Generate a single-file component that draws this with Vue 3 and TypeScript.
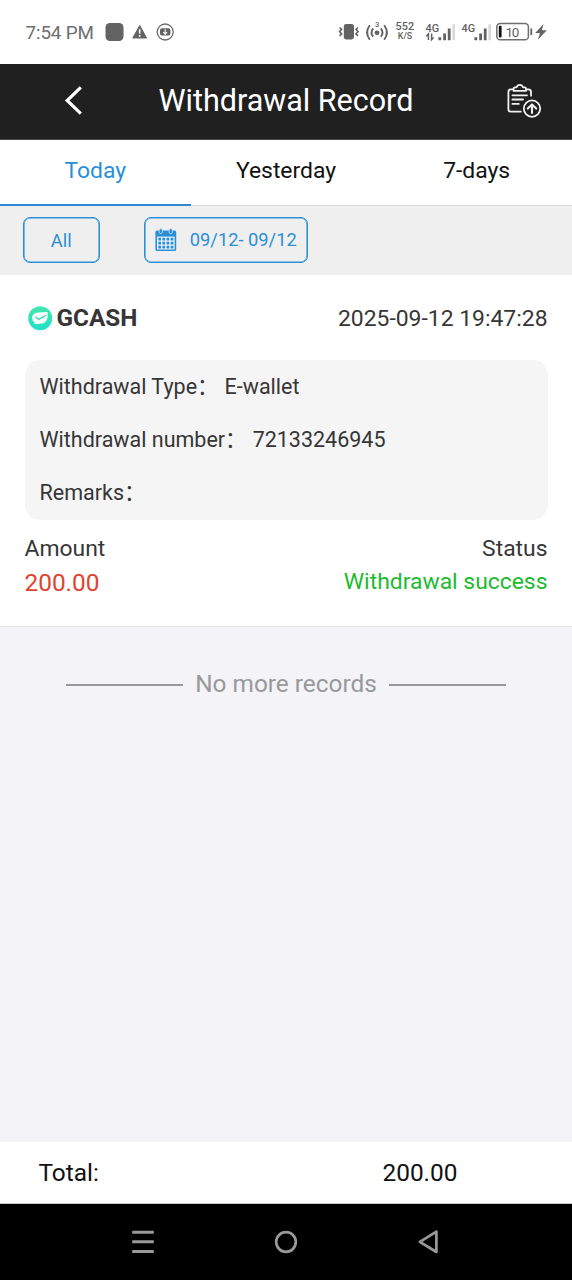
<script setup lang="ts">
import { ref } from 'vue'

interface Detail {
  label: string
  value: string
}

const tabs: string[] = ['Today', 'Yesterday', '7-days']
const active = ref(0)

const details: Detail[] = [
  { label: 'Withdrawal Type', value: 'E-wallet' },
  { label: 'Withdrawal number', value: '72133246945' },
  { label: 'Remarks', value: '' },
]

const gridRows = [0, 1, 2]
const gridCols = [0, 1, 2, 3]
</script>

<template>
  <div class="screen">
    <div class="status">
      <span class="clock">7:54 PM</span>
      <svg class="notices" width="72" height="24" viewBox="104 20 72 24">
        <rect x="105.5" y="23" width="18" height="18" rx="4.5" fill="#636363" />
        <path d="M139.7 25.5 L146.6 38 H132.8 Z" fill="#636363" stroke="#636363" stroke-linejoin="round" />
        <path d="M139.7 29.3 V33.8 M139.7 35 V36.8" stroke="#fff" stroke-width="1.6" />
        <circle cx="165.2" cy="32" r="8" fill="none" stroke="#6b6b6b" stroke-width="1.3" />
        <rect x="160" y="28.2" width="10.4" height="7.4" rx="2" fill="#636363" />
        <path d="M165.2 29.3 V33.8 M163.3 32.2 L165.2 34.2 L167.1 32.2" fill="none" stroke="#fff" stroke-width="1.1" />
      </svg>
      <svg class="signals" width="216" height="32" viewBox="336 16 216 32">
        <g fill="none" stroke="#636363" stroke-width="1.6">
          <rect x="344.6" y="24.8" width="8.6" height="13.8" rx="1.6" fill="#636363" />
          <path d="M339.6 27.5 l2 1.8 l-2 2.3 l2 2.3 l-2 2" />
          <path d="M358 27.5 l-2 1.8 l2 2.3 l-2 2.3 l2 2" />
          <g stroke-width="1.9">
            <path d="M369.8 25.3 Q364.4 32.5 369.8 39.7 M373.2 28.3 Q369.8 32.5 373.2 36.7" />
            <path d="M384.2 25.3 Q389.6 32.5 384.2 39.7 M380.8 28.3 Q384.2 32.5 380.8 36.7" />
          </g>
        </g>
        <circle cx="377" cy="32.8" r="2.4" fill="#636363" />
        <g class="tiny" fill="#5f5f5f">
          <text x="374.9" y="27" font-size="7.6">3</text>
          <text x="395.6" y="29.8" font-size="11.2" textLength="18.6" lengthAdjust="spacingAndGlyphs">552</text>
          <text x="397.8" y="38.9" font-size="9" textLength="14.4" lengthAdjust="spacingAndGlyphs">K/S</text>
          <text x="425.6" y="31.6" font-size="11.2" textLength="13.6" lengthAdjust="spacingAndGlyphs">4G</text>
          <text x="461.6" y="31.6" font-size="11.2" textLength="13.6" lengthAdjust="spacingAndGlyphs">4G</text>
          <text x="505.4" y="36.5" font-size="13.4" textLength="13.8" class="level">10</text>
        </g>
        <path d="M428.4 40 V34 l-2 2.2 M431.6 33.5 V39.6 l2 -2.2" fill="none" stroke="#636363" stroke-width="1.5" />
        <g fill="#636363">
          <path d="M438.4 37.2h2.8v3h-2.8z M443.2 33.4h2.8v6.8h-2.8z M447.8 28.4h2.8v11.8h-2.8z" />
          <path d="M474.4 37.2h2.8v3h-2.8z M479.2 33.4h2.8v6.8h-2.8z M483.8 28.4h2.8v11.8h-2.8z" />
          <path d="M452.4 24.2h2.6v16h-2.6z M488.4 24.2h2.6v16h-2.6z" fill="#d9d9d9" />
          <rect x="530.4" y="28.5" width="1.8" height="6.6" />
          <path d="M543.6 24 L535.2 33 H540 L537.8 39.8 L546.8 30.2 H541.8 Z" />
        </g>
        <rect x="496.8" y="23.6" width="31.6" height="16.2" rx="3.4" fill="none" stroke="#6f6f6f" stroke-width="1.5" />
        <rect x="498.8" y="25.8" width="2.8" height="11.8" rx="1" fill="#111" />
      </svg>
    </div>

    <header class="header">
      <svg class="back" width="24" height="34" viewBox="62 84 24 34">
        <path d="M80.8 87.4 L67.2 100.5 L80.8 113.6" fill="none" stroke="#fff" stroke-width="3.2" />
      </svg>
      <h1>Withdrawal Record</h1>
      <svg class="report" width="40" height="40" viewBox="504 82 40 40">
        <g fill="none" stroke="#f0f0f0" stroke-width="1.8" stroke-linecap="round" stroke-linejoin="round">
          <path d="M513 90.3 H511 Q508.4 90.3 508.4 93 V109.9 Q508.4 112.7 511 112.7 H520.8 M526.6 90.3 H528.4 Q531 90.3 531 93 V96.7" />
          <path d="M513.6 91.9 V89.5 Q513.6 88.3 515 88.3 H516.6 Q517.4 85.9 519.8 85.9 Q522.2 85.9 523 88.3 H524.6 Q526 88.3 526 89.5 V91.9 Z" />
          <path d="M512.4 96.3 H527 M512.4 100.5 H523 M512.4 104.9 H518.8" />
          <circle cx="532" cy="109.6" r="8.2" />
          <path d="M532 114 V106 M527.8 109.6 L532 105.4 L536.2 109.6" stroke-width="2.1" />
        </g>
      </svg>
    </header>

    <nav class="tabs">
      <button
        v-for="(tab, i) in tabs"
        :key="tab"
        type="button"
        :class="{ active: i === active }"
        @click="active = i"
      >
        {{ tab }}
      </button>
    </nav>

    <div class="filters">
      <button type="button" class="chip all">All</button>
      <button type="button" class="chip range">
        <svg width="22" height="24" viewBox="0 0 22 24">
          <path d="M.4 4.2 Q.4 2.6 2 2.6 H19.6 Q21.2 2.6 21.2 4.2 V21.4 Q21.2 23 19.6 23 H2 Q.4 23 .4 21.4 Z" fill="#2a8fd8" />
          <rect x="2" y="8.6" width="17.6" height="12.9" fill="#f4f7fa" />
          <g fill="#2a8fd8" stroke="#efefef" stroke-width=".7">
            <rect x="4.2" y=".6" width="3.2" height="5" rx="1.5" />
            <rect x="14.2" y=".6" width="3.2" height="5" rx="1.5" />
          </g>
          <g v-for="r in gridRows" :key="r" fill="#2a8fd8">
            <rect v-for="c in gridCols" :key="c" :x="3.3 + c * 4.1" :y="9.7 + r * 4" width="2.8" height="2.8" />
          </g>
        </svg>
        <span>09/12- 09/12</span>
      </button>
    </div>

    <section class="card">
      <div class="card-head">
        <svg width="26" height="26" viewBox="0 0 26 26">
          <defs>
            <linearGradient id="mint" x1="0" y1="0" x2="0" y2="1">
              <stop offset="0" stop-color="#43e8ad" />
              <stop offset="1" stop-color="#20dfc8" />
            </linearGradient>
          </defs>
          <circle cx="13.2" cy="13.2" r="12" fill="url(#mint)" />
          <path d="M5 13.2 Q5 7.6 11.5 7.4 Q17 6.8 20.7 7.2 Q21.6 18 14.5 18.5 Q10 19 7 19 L7.8 17.4 Q5 16 5 13.2 Z" fill="#f5fffc" />
          <path d="M8.6 11.8 L11.6 14.4 L19 10.2" fill="none" stroke="#35d9b2" stroke-width="1.3" />
        </svg>
        <strong>GCASH</strong>
        <time>2025-09-12 19:47:28</time>
      </div>

      <dl class="details">
        <div v-for="row in details" :key="row.label">
          <dt>{{ row.label }}：</dt>
          <dd>{{ row.value }}</dd>
        </div>
      </dl>

      <div class="summary labels">
        <span class="amount-label">Amount</span>
        <span class="status-label">Status</span>
      </div>
      <div class="summary values">
        <span class="amount">200.00</span>
        <span class="success">Withdrawal success</span>
      </div>
    </section>

    <main class="rest">
      <div class="end">
        <i></i>
        <span>No more records</span>
        <i></i>
      </div>
    </main>

    <footer class="total">
      <span>Total:</span>
      <span class="sum">200.00</span>
    </footer>

    <div class="navbar">
      <svg width="24" height="26" viewBox="0 0 24 26">
        <path d="M1.2 3.3 H22.8 M1.2 12.8 H22.8 M1.2 22.4 H22.8" stroke="#999" stroke-width="3" />
      </svg>
      <svg width="24" height="26" viewBox="0 0 24 26">
        <circle cx="12" cy="13" r="9.8" fill="none" stroke="#999" stroke-width="2.7" />
      </svg>
      <svg width="24" height="26" viewBox="0 0 24 26">
        <path d="M19.4 2.6 V23 L2.9 12.8 Z" fill="none" stroke="#999" stroke-width="2.7" stroke-linejoin="round" />
      </svg>
    </div>
  </div>
</template>

<style>
body {
  margin: 0;
}
</style>

<style scoped>
.screen {
  display: flex;
  flex-direction: column;
  width: 572px;
  height: 1280px;
  overflow: hidden;
  background: #f3f3f8;
  font-family: Roboto, "Noto Sans CJK SC", sans-serif;
  color: #363636;
  white-space: nowrap;
}
svg {
  display: block;
  flex: none;
}
button {
  margin: 0;
  padding: 0;
  border: 0;
  background: none;
  font-family: inherit;
}
.status {
  display: flex;
  align-items: center;
  height: 64px;
  flex: none;
  background: #fff;
}
.clock {
  width: 78.5px;
  padding: 2px 0 0 25.5px;
  font-size: 18.8px;
  letter-spacing: -0.1px;
  color: #6e6e6e;
}
.signals {
  margin-left: 160px;
}
.tiny {
  font-family: Roboto, sans-serif;
  font-weight: 500;
}
.level {
  font-weight: 400;
}
.header {
  display: flex;
  align-items: center;
  box-sizing: border-box;
  height: 76px;
  flex: none;
  padding: 0 28px 2px 62px;
  border-bottom: 1px solid #4a4748;
  background: #202020;
}
h1 {
  flex: 1;
  margin: 0 0 0 72.5px;
  font-size: 30.5px;
  line-height: 40px;
  font-weight: 400;
  color: #fff;
}
.tabs {
  display: grid;
  grid-template-columns: repeat(3, 1fr);
  height: 66px;
  flex: none;
  background: #fff;
}
.tabs button {
  padding-bottom: 4px;
  border-bottom: 1px solid #d8d8d8;
  font-size: 22.9px;
  color: #111;
}
.tabs button.active {
  padding-bottom: 3px;
  border-bottom: 2px solid #2a8ad4;
  color: #2a8fd8;
}
.filters {
  display: flex;
  align-items: flex-start;
  gap: 44.5px;
  box-sizing: border-box;
  height: 69px;
  flex: none;
  padding: 11px 23px;
  background: #efefef;
}
.chip {
  display: flex;
  align-items: center;
  justify-content: center;
  box-sizing: border-box;
  height: 46px;
  border: 1px solid #2a8fd8;
  border-radius: 7px;
  box-shadow: inset 0 0 0 0.6px #2a8fd8;
  font-size: 18.3px;
  color: #2a8fd8;
}
.all {
  width: 76.5px;
}
.range {
  width: 164px;
  gap: 12.5px;
}
.range span {
  padding-bottom: 2px;
}
.card {
  box-sizing: border-box;
  height: 352px;
  flex: none;
  padding: 26px 24.5px 0;
  border-bottom: 1px solid #e6e6e9;
  background: #fff;
}
.card-head {
  display: flex;
  align-items: center;
  height: 34px;
  padding-left: 2.5px;
  font-size: 22.9px;
}
.card-head strong {
  margin-left: 3.5px;
  padding-bottom: 2px;
  font-size: 24.3px;
  font-weight: 700;
}
.card-head time {
  margin-left: auto;
}
.details {
  box-sizing: border-box;
  height: 160px;
  margin: 25px 0 0;
  border-radius: 15px;
  background: #f5f5f5;
  font-size: 21.5px;
}
.details div {
  display: flex;
  height: 53.2px;
  padding-left: 15px;
  line-height: 53px;
}
.details dd {
  margin: 0 0 0 6px;
}
.summary {
  display: flex;
  justify-content: space-between;
}
.labels {
  height: 33px;
  margin-top: 12px;
  font-size: 22.9px;
  line-height: 34px;
}
.values {
  line-height: 34px;
}
.amount {
  padding-top: 1px;
  font-size: 24.4px;
  color: #dc4531;
}
.success {
  font-size: 22.9px;
  color: #1cbb30;
}
.rest {
  flex: 1;
}
.end {
  display: flex;
  align-items: center;
  justify-content: center;
  gap: 12px;
  margin-top: 38px;
  height: 40px;
  font-size: 24.4px;
  color: #999;
}
.end span {
  padding-bottom: 3px;
}
.end i {
  width: 117px;
  height: 1.5px;
  background: #999;
}
.total {
  display: flex;
  align-items: center;
  box-sizing: border-box;
  height: 62px;
  flex: none;
  padding: 0 0 1px 38.5px;
  border-bottom: 1px solid #c8c8c8;
  background: #fff;
  font-size: 24.4px;
  color: #111;
}
.total span:first-child {
  width: 344px;
}
.navbar {
  display: flex;
  align-items: center;
  justify-content: center;
  gap: 119px;
  height: 76px;
  flex: none;
  background: #000;
}
</style>
